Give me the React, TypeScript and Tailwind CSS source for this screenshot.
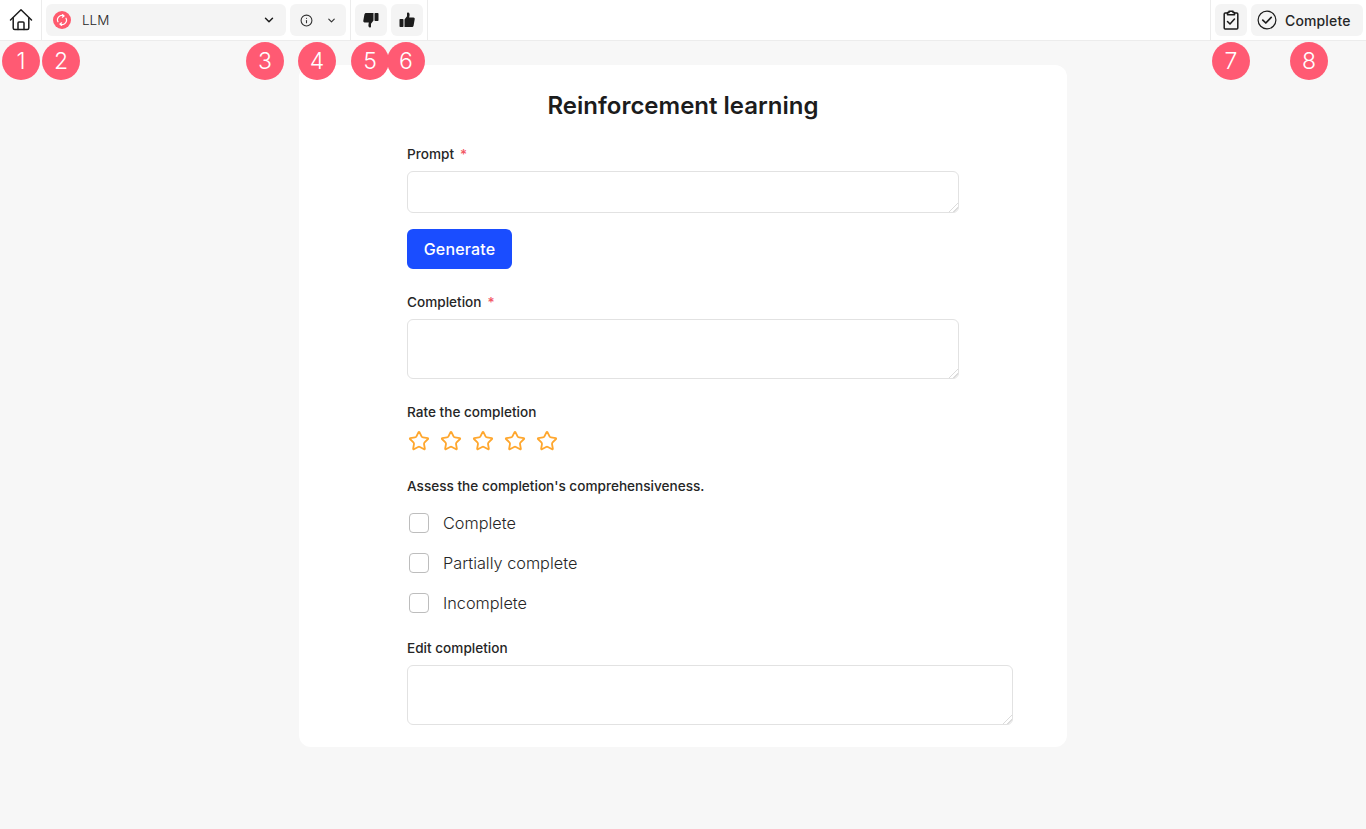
import React from 'react';
import { ChevronDown, Info, Star } from 'lucide-react';

const badges = [
  { n: 1, cls: 'left-[2px]' },
  { n: 2, cls: 'left-[42px]' },
  { n: 3, cls: 'left-[246px]' },
  { n: 4, cls: 'left-[298px]' },
  { n: 5, cls: 'left-[351px]' },
  { n: 6, cls: 'left-[387px]' },
  { n: 7, cls: 'left-[1212px]' },
  { n: 8, cls: 'left-[1290px]' },
];

const HomeIcon = () => (
  <svg width="24" height="24" viewBox="0 0 24 24" fill="none" stroke="#1c1c1c" strokeWidth="1.5" strokeLinecap="round" strokeLinejoin="round">
    <path d="M1.5 12 L12 1.8 L22.5 12" />
    <path d="M4.2 10 V20 a1.5 1.5 0 0 0 1.5 1.5 H18.3 a1.5 1.5 0 0 0 1.5 -1.5 V10" />
    <path d="M9 21.5 V15 a1 1 0 0 1 1 -1 H14 a1 1 0 0 1 1 1 V21.5" />
  </svg>
);

const ThumbIcon = ({ cls }: { cls?: string }) => (
  <svg width="16" height="16" viewBox="0 0 16 16" fill="#1c1c1c" className={cls}>
    <rect x="0.5" y="7" width="4" height="8" rx="0.8" />
    <path d="M5.5 7.5 L8 4.2 V1.5 C8 0.6 8.6 0.3 9.2 0.4 C10.2 0.6 10.6 1.6 10.6 2.8 L10.2 5.6 H14.4 C15.4 5.6 15.9 6.4 15.7 7.2 L14.6 13.4 C14.4 14.4 13.8 15 12.8 15 H5.5 Z" />
  </svg>
);

const ClipboardIcon = () => (
  <svg width="20" height="20" viewBox="0 0 20 20" fill="none" stroke="#1c1c1c" strokeWidth="1.5" strokeLinecap="round" strokeLinejoin="round">
    <path d="M6.5 3 H4.2 a1 1 0 0 0 -1 1 V18 a1 1 0 0 0 1 1 H15.8 a1 1 0 0 0 1 -1 V4 a1 1 0 0 0 -1 -1 H13.5" />
    <path d="M6.5 4.8 V2.6 H8 V1.2 H12 V2.6 H13.5 V4.8 Z" />
    <path d="M6.5 11.5 L9 14 L13.5 9" />
  </svg>
);

const CheckCircleIcon = () => (
  <svg width="20" height="20" viewBox="0 0 20 20" fill="none" stroke="#1c1c1c" strokeLinecap="round" strokeLinejoin="round">
    <circle cx="10" cy="10" r="8.9" strokeWidth="1.2" />
    <path d="M5.8 10.2 L8.8 13 L14.2 7.4" strokeWidth="1.7" />
  </svg>
);

const LlmIcon = () => (
  <svg width="12" height="12" viewBox="0 0 12 12" fill="none" stroke="#ffffff" strokeWidth="1.2" strokeLinecap="round" strokeLinejoin="round">
    <path d="M2 7.8 A4.3 4.3 0 0 1 7.6 1.9" />
    <path d="M10 4.2 A4.3 4.3 0 0 1 4.4 10.1" />
    <path d="M6.6 0.6 L8 2 L6.4 3.2" />
    <path d="M5.4 11.4 L4 10 L5.6 8.8" />
  </svg>
);

const Label = ({ text, required }: { text: string; required?: boolean }) => (
  <div className="h-[18px] text-[13.6px] leading-[18px] font-medium text-[#262626]">
    {text}
    {required && <span className="ml-1.5 text-[#f2555f]">*</span>}
  </div>
);

const Area = ({ cls }: { cls: string }) => (
  <textarea
    className={`block rounded-md border border-[#e2e2e2] bg-white [&::-webkit-resizer]:bg-[linear-gradient(135deg,transparent_68%,#dcdcdc_68%,#dcdcdc_73%,transparent_73%,transparent_82%,#dcdcdc_82%,#dcdcdc_87%,transparent_87%)] ${cls}`}
  />
);

const Check = ({ text }: { text: string }) => (
  <label className="flex h-5 items-center pl-0.5">
    <span className="h-5 w-5 rounded-[4px] border border-[#bdbdbd] bg-white" />
    <span className="ml-3.5 text-[16.3px] font-light text-[#262626]">{text}</span>
  </label>
);

export default function App() {
  return (
    <div className="relative min-h-[829px] bg-[#f7f7f7] font-['Inter',sans-serif]">
      <header className="flex h-[41px] items-center justify-between border-b border-[#ececec] bg-white">
        <div className="flex h-10 items-center">
          <div className="flex h-10 w-[42px] items-center justify-center border-r border-[#ececec]">
            <HomeIcon />
          </div>
          <div className="ml-1 flex h-8 w-60 items-center rounded-md bg-[#f4f4f4] pl-[7px] pr-2.5">
            <span className="flex h-[18px] w-[18px] items-center justify-center rounded-full bg-[#ff5a6e]">
              <LlmIcon />
            </span>
            <span className="ml-[11px] flex-1 text-[13.5px] font-light text-[#262626]">LLM</span>
            <ChevronDown size={14} strokeWidth={2.5} className="text-[#1c1c1c]" />
          </div>
          <div className="ml-1 flex h-8 w-14 items-center justify-center gap-[13px] rounded-md bg-[#f4f4f4]">
            <Info size={13} className="text-[#333333]" />
            <ChevronDown size={11} strokeWidth={2.5} className="text-[#333333]" />
          </div>
          <div className="ml-1 flex h-10 items-center gap-1 border-x border-[#ececec] px-1">
            <span className="flex h-8 w-8 items-center justify-center rounded-md bg-[#f4f4f4]">
              <ThumbIcon cls="rotate-180" />
            </span>
            <span className="flex h-8 w-8 items-center justify-center rounded-md bg-[#f4f4f4]">
              <ThumbIcon />
            </span>
          </div>
        </div>
        <div className="flex h-10 items-center gap-1 border-l border-[#ececec] pl-1 pr-[3px]">
          <span className="flex h-8 w-8 items-center justify-center rounded-md bg-[#f4f4f4]">
            <ClipboardIcon />
          </span>
          <span className="flex h-8 w-28 items-center rounded-md bg-[#f4f4f4] pl-[6px]">
            <CheckCircleIcon />
            <span className="ml-2 text-[14px] font-medium tracking-[0.01em] text-[#262626]">Complete</span>
          </span>
        </div>
      </header>

      <main className="ml-[299px] mt-6 h-[682px] w-[768px] rounded-xl bg-white pl-[108px] pt-[25px]">
        <h1 className="-ml-[108px] text-center text-[24px] leading-8 font-semibold text-[#1c1c1c]">Reinforcement learning</h1>
        <div className="mt-[23px]">
          <Label text="Prompt" required />
        </div>
        <Area cls="mt-2 h-[42px] w-[552px]" />
        <button className="mt-4 h-10 w-[105px] rounded-md bg-[#1a4dff] text-[16px] font-medium tracking-[0.01em] text-white">Generate</button>
        <div className="mt-6">
          <Label text="Completion" required />
        </div>
        <Area cls="mt-2 h-[60px] w-[552px]" />
        <div className="mt-6">
          <Label text="Rate the completion" />
        </div>
        <div className="mt-[9px] flex gap-2.5 pl-px">
          {[0, 1, 2, 3, 4].map((i) => (
            <Star key={i} size={22} strokeWidth={2} className="text-[#ffa72e]" />
          ))}
        </div>
        <div className="mt-[25px]">
          <Label text="Assess the completion's comprehensiveness." />
        </div>
        <div className="mt-[18px] flex flex-col gap-5">
          <Check text="Complete" />
          <Check text="Partially complete" />
          <Check text="Incomplete" />
        </div>
        <div className="mt-[26px]">
          <Label text="Edit completion" />
        </div>
        <Area cls="mt-2 h-[60px] w-[606px]" />
      </main>

      {badges.map((b) => (
        <span
          key={b.n}
          className={`absolute top-[42px] flex h-[38px] w-[38px] items-center justify-center rounded-full bg-[#ff5a73] text-[23px] font-light text-white ${b.cls}`}
        >
          {b.n}
        </span>
      ))}
    </div>
  );
}
